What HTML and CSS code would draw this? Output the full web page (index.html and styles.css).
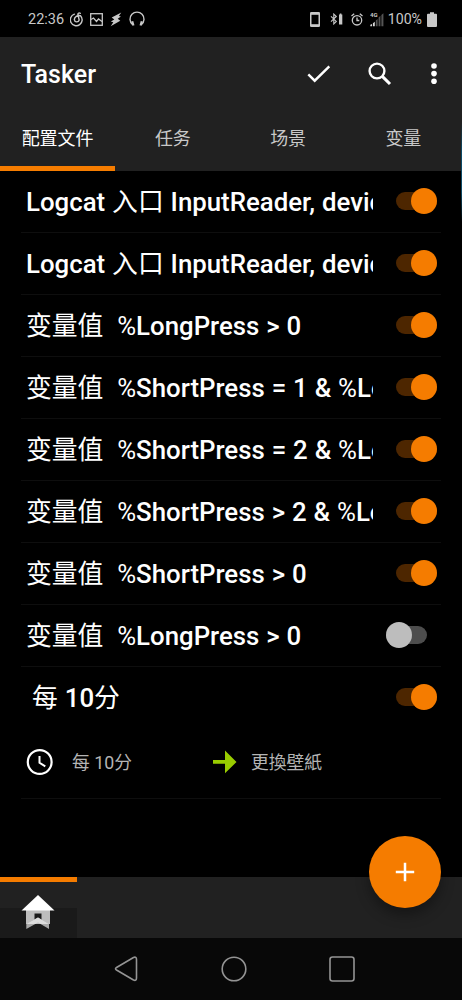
FILE: index.html
```html
<!DOCTYPE html>
<html lang="zh-CN">
<head>
  <meta charset="UTF-8" />
  <meta name="viewport" content="width=device-width, initial-scale=1" />
  <title>Tasker</title>
  <link rel="stylesheet" href="styles.css">
</head>
<body>
  <div class="status-bar">
    <div class="status-left">
      <span class="time">22:36</span>
      <svg class="ic-music" width="14" height="15" viewBox="0 0 14 15" fill="none" stroke="#c8c8c8" stroke-width="1.4" stroke-linecap="round">
        <path d="M4.400 2.200A5.900 5.900 0 1 0 10.500 3.700C7.500 3 4.300 4.600 4.300 7.700A2.500 2.500 0 0 0 9.200 8L7.900 2.500C7.700 1 9.300.6 10.300 1.300" />
      </svg>
      <svg class="ic-image" width="13" height="13" viewBox="0 0 13 13" fill="none" stroke="#c8c8c8" stroke-width="1.3">
        <rect x=".7" y=".7" width="11.6" height="11.6" />
        <path d="M1 6.500 3.500 5l3 3.500L8.500 6l3.500 2.500" />
      </svg>
      <svg class="ic-bolt" width="12" height="15" viewBox="0 0 12 15" fill="#c8c8c8">
        <path d="M11.300.5 1.700 5.500l2.600 1.900L.8 9.600l2.500.7L.7 14.300 10.300 8.700 7.700 6.800l3.200-2.300-2-.5z" />
      </svg>
      <svg class="ic-headset" width="16" height="16" viewBox="0 0 16 16" fill="none" stroke="#c8c8c8" stroke-width="1.4">
        <path d="M3.500 13.500A7 7 0 1 1 12.500 13.500" />
        <path d="M3.200 10.200l1.200 4.300M12.800 10.200l-1.200 4.300" stroke-width="2.2" />
      </svg>
    </div>
    <div class="status-right">
      <svg class="ic-phone" width="10" height="15" viewBox="0 0 10 15">
        <rect width="10" height="15" rx="1.3" fill="#c8c8c8" />
        <rect x="1.5" y="2.8" width="7" height="9.4" fill="#000" />
      </svg>
      <svg class="ic-bt" width="13" height="12" viewBox="0 0 13 12">
        <path d="M1 3.300 6.300 8.400 3.800 10.900V1.100L6.300 3.500 1 8.700" fill="none" stroke="#c8c8c8" stroke-width="1.1" />
        <path d="M9 1.500h.8V.6h1.600v.9h.9V11.500H9z" fill="#c8c8c8" />
      </svg>
      <svg class="ic-alarm" width="12" height="13" viewBox="0 0 12 13" fill="none" stroke="#c8c8c8" stroke-width="1.3">
        <circle cx="6" cy="7.3" r="4.7" />
        <path d="M6 4.500v3h2.300M.5 3 3.200.8M11.500 3 8.800.8" />
      </svg>
      <svg class="ic-signal" width="14" height="15" viewBox="0 0 14 15">
        <text x="0" y="5.3" class="net">4G</text>
        <path d="M.3 14.300v-1.500l1.700-.8v2.300zM2.900 14.300v-3l1.900-1.500v4.500z" fill="#d8d8d8" />
        <path d="M5.800 14.300V8.500l1.800-1.400v7.200zM8.600 14.300V5.500l1.800-1.700v10.500zM11.400 14.300V3l2-1.800v13.100z" fill="#555" />
      </svg>
      <span class="percent">100%</span>
      <svg class="ic-battery" width="10" height="15" viewBox="0 0 10 15" fill="#c8c8c8">
        <path d="M1 1.700h2V.3h4v1.400h2a1 1 0 0 1 1 1V14a1 1 0 0 1-1 1H1a1 1 0 0 1-1-1V2.700a1 1 0 0 1 1-1z" />
      </svg>
    </div>
  </div>

  <div class="header">
    <div class="toolbar">
      <h1>Tasker</h1>
      <svg class="ic-check" width="24" height="18" viewBox="0 0 24 18" fill="none" stroke="#fff" stroke-width="2.4">
        <path d="M1.300 9.300 7.700 15.700 22.300 1.300" />
      </svg>
      <svg class="ic-search" width="24" height="24" viewBox="0 0 24 24" fill="none" stroke="#fff">
        <circle cx="9" cy="9" r="7.4" stroke-width="2.4" />
        <path d="M14.300 14.300 22 22" stroke-width="3.1" />
      </svg>
      <svg class="ic-more" width="6" height="22" viewBox="0 0 6 22" fill="#fff">
        <circle cx="3" cy="3" r="2.8" />
        <circle cx="3" cy="10.6" r="2.8" />
        <circle cx="3" cy="18.2" r="2.8" />
      </svg>
    </div>
    <div class="tabs">
      <div class="tab active">配置文件</div>
      <div class="tab">任务</div>
      <div class="tab">场景</div>
      <div class="tab">变量</div>
    </div>
  </div>

  <div class="profiles">
    <div class="profile">
      <span class="profile-name">Logcat <i>入口</i> InputReader, devic</span>
      <span class="switch on"></span>
    </div>
    <div class="profile">
      <span class="profile-name">Logcat <i>入口</i> InputReader, devic</span>
      <span class="switch on"></span>
    </div>
    <div class="profile">
      <span class="profile-name"><i>变量值&nbsp; %</i>LongPress &gt; 0</span>
      <span class="switch on"></span>
    </div>
    <div class="profile">
      <span class="profile-name"><i>变量值&nbsp; %</i>ShortPress = 1 &amp; <i>%</i>Lo</span>
      <span class="switch on"></span>
    </div>
    <div class="profile">
      <span class="profile-name"><i>变量值&nbsp; %</i>ShortPress = 2 &amp; <i>%</i>Lo</span>
      <span class="switch on"></span>
    </div>
    <div class="profile">
      <span class="profile-name"><i>变量值&nbsp; %</i>ShortPress &gt; 2 &amp; <i>%</i>Lo</span>
      <span class="switch on"></span>
    </div>
    <div class="profile">
      <span class="profile-name"><i>变量值&nbsp; %</i>ShortPress &gt; 0</span>
      <span class="switch on"></span>
    </div>
    <div class="profile">
      <span class="profile-name"><i>变量值&nbsp; %</i>LongPress &gt; 0</span>
      <span class="switch"></span>
    </div>
    <div class="profile open">
      <span class="profile-name"><i>每</i> 10<i>分</i></span>
      <span class="switch on"></span>
    </div>
    <div class="detail">
      <div class="context">
        <svg width="28" height="28" viewBox="0 0 28 28" fill="none" stroke="#fff">
          <circle cx="13.7" cy="14" r="11.9" stroke-width="2.2" />
          <path d="M13.500 8v6.800l5.800 3.500" stroke-width="2" />
        </svg>
        <span>每 10分</span>
      </div>
      <div class="task">
        <svg width="24" height="24" viewBox="0 0 24 24" fill="#99cc00">
          <path d="M0 10h12V.5L23.500 12 12 23.300V13.700H0z" />
        </svg>
        <span>更換壁紙</span>
      </div>
    </div>
  </div>

  <div class="bottom-bar">
    <div class="project">
      <svg width="34" height="36" viewBox="0 0 34 36">
        <path d="M5 15h24v14H5z" fill="#bdbdbd" />
        <path d="M13.500 18.500h7V25h-7z" fill="#1a1a1a" />
        <path d="M5.300 29 17 22.500 28 29v5l-11-6.500L5.300 34z" fill="#a8a8a8" />
        <path d="M5.300 29 17 22.500 28 29h-8.500L17 27.500 14.500 29z" fill="#dcdcdc" />
        <path d="M17 0 33.500 15.500H.5z" fill="#fff" />
      </svg>
    </div>
    <div class="fab">
      <svg width="20" height="20" viewBox="0 0 20 20" stroke="#fff" stroke-width="2.5">
        <path d="M10 .8v18.400M.8 10h18.400" />
      </svg>
    </div>
  </div>

  <div class="nav-bar">
    <svg width="26" height="28" viewBox="0 0 26 28" fill="none" stroke="#949494" stroke-width="1.6" stroke-linejoin="round">
      <path d="M3.500 12.500 20.500 2.500Q23.500 1.300 23.500 4.500V23Q23.500 26.200 20.500 25L3.500 15Q1.500 13.700 3.500 12.500z" />
    </svg>
    <svg width="26" height="26" viewBox="0 0 26 26" fill="none" stroke="#949494" stroke-width="1.6">
      <circle cx="13" cy="13" r="11.8" />
    </svg>
    <svg width="26" height="26" viewBox="0 0 26 26" fill="none" stroke="#949494" stroke-width="1.6">
      <rect x="1" y="1" width="24" height="24" rx="2.5" />
    </svg>
  </div>

  <div class="edge-panel"></div>
</body>
</html>
```
FILE: styles.css
```css
* {
  box-sizing: border-box;
}

body {
  margin: 0;
  height: 1000px;
  overflow: hidden;
  background-color: #000;
  color: #fff;
  font-family: Roboto, 'Noto Sans CJK SC', sans-serif;
  display: flex;
  flex-direction: column;
  position: relative;
}

svg {
  display: block;
  flex: none;
}

.status-bar {
  height: 37px;
  padding: 1px 25px 0 28px;
  display: flex;
  align-items: center;
  justify-content: space-between;
  color: #c8c8c8;
  font-size: 14.5px;
}

.status-left,
.status-right {
  display: flex;
  align-items: center;
}

.ic-music {
  margin-left: 6px;
}

.ic-image {
  margin-left: 6px;
}

.ic-bolt {
  margin-left: 7px;
}

.ic-headset {
  margin-left: 7px;
}

.ic-bt {
  margin-left: 10px;
}

.ic-alarm {
  margin-left: 8px;
}

.ic-signal {
  margin-left: 7px;
}

.net {
  font-size: 6px;
  font-weight: 700;
  fill: #c8c8c8;
}

.percent {
  margin: 0 5px 0 4px;
  font-size: 14.2px;
}

.header {
  height: 134px;
  background-color: #212121;
}

.toolbar {
  height: 73px;
  padding: 0 25px 0 21px;
  display: flex;
  align-items: center;
}

h1 {
  margin: 1px auto 0 0;
  font-size: 25px;
  font-weight: 500;
}

.ic-search {
  margin-left: 37px;
}

.ic-more {
  margin-left: 39px;
}

.tabs {
  height: 61px;
  padding-right: 1px;
  display: grid;
  grid-template-columns: repeat(4, 1fr);
}

.tab {
  padding-top: 16px;
  line-height: 26px;
  font-size: 18px;
  text-align: center;
  color: #c8c8c8;
  border-bottom: 5px solid transparent;
}

.tab.active {
  color: #fff;
  border-bottom-color: #f57c00;
}

.profiles {
  flex: 1;
  padding: 0 21px;
}

.profile {
  height: 62px;
  padding: 0 4px 0 5px;
  border-bottom: 1px solid #0e0e0e;
  display: flex;
  align-items: center;
  justify-content: space-between;
}

.profile-name {
  width: 347px;
  overflow: hidden;
  white-space: nowrap;
  font-size: 25.8px;
  font-weight: 500;
  line-height: 40px;
  word-spacing: 0.5px;
}

.profile-name i {
  font-style: normal;
  font-weight: 400;
}

.switch {
  width: 41px;
  height: 18px;
  margin: 0 10px 2px 0;
  border-radius: 9px;
  background-color: #4d4d4d;
  display: flex;
  align-items: center;
}

.switch::after {
  content: '';
  flex: none;
  width: 26px;
  height: 26px;
  border-radius: 50%;
  background-color: #bdbdbd;
}

.switch.on {
  margin-right: 0;
  background-color: #4d2600;
  justify-content: flex-end;
}

.switch.on::after {
  background-color: #f57c00;
}

.profile.open {
  border-bottom: none;
}

.profile.open .profile-name {
  padding-left: 6px;
}

.detail {
  height: 70px;
  padding: 0 0 4px 5px;
  border-bottom: 1px solid #0e0e0e;
  display: grid;
  grid-template-columns: 187px 1fr;
  color: #b4b4b4;
  font-size: 17.8px;
}

.context,
.task {
  display: flex;
  align-items: center;
}

.context span,
.task span {
  margin: 0 0 2px 18px;
}

.task span {
  margin-left: 14px;
}

.bottom-bar {
  height: 61px;
  background-color: #212121;
  position: relative;
}

.project {
  width: 77px;
  height: 61px;
  padding: 13px 1px 0 0;
  border-top: 5px solid #f57c00;
  background: linear-gradient(#212121 26px, #1a1a1a 26px);
  display: flex;
  justify-content: center;
}

.fab {
  position: absolute;
  right: 21px;
  top: -41px;
  width: 72px;
  height: 72px;
  border-radius: 50%;
  background-color: #f57c00;
  box-shadow: 0 7px 13px rgba(0, 0, 0, 0.35);
  display: flex;
  align-items: center;
  justify-content: center;
}

.nav-bar {
  height: 62px;
  padding-left: 6px;
  background-color: #080808;
  display: flex;
  align-items: center;
  justify-content: center;
  gap: 82px;
}

/* edge panel handle */
.edge-panel {
  position: absolute;
  top: 122px;
  right: 0;
  width: 1px;
  height: 100px;
  background: linear-gradient(transparent, #0d4a66 30%, #0d4a66 70%, transparent);
}
```
